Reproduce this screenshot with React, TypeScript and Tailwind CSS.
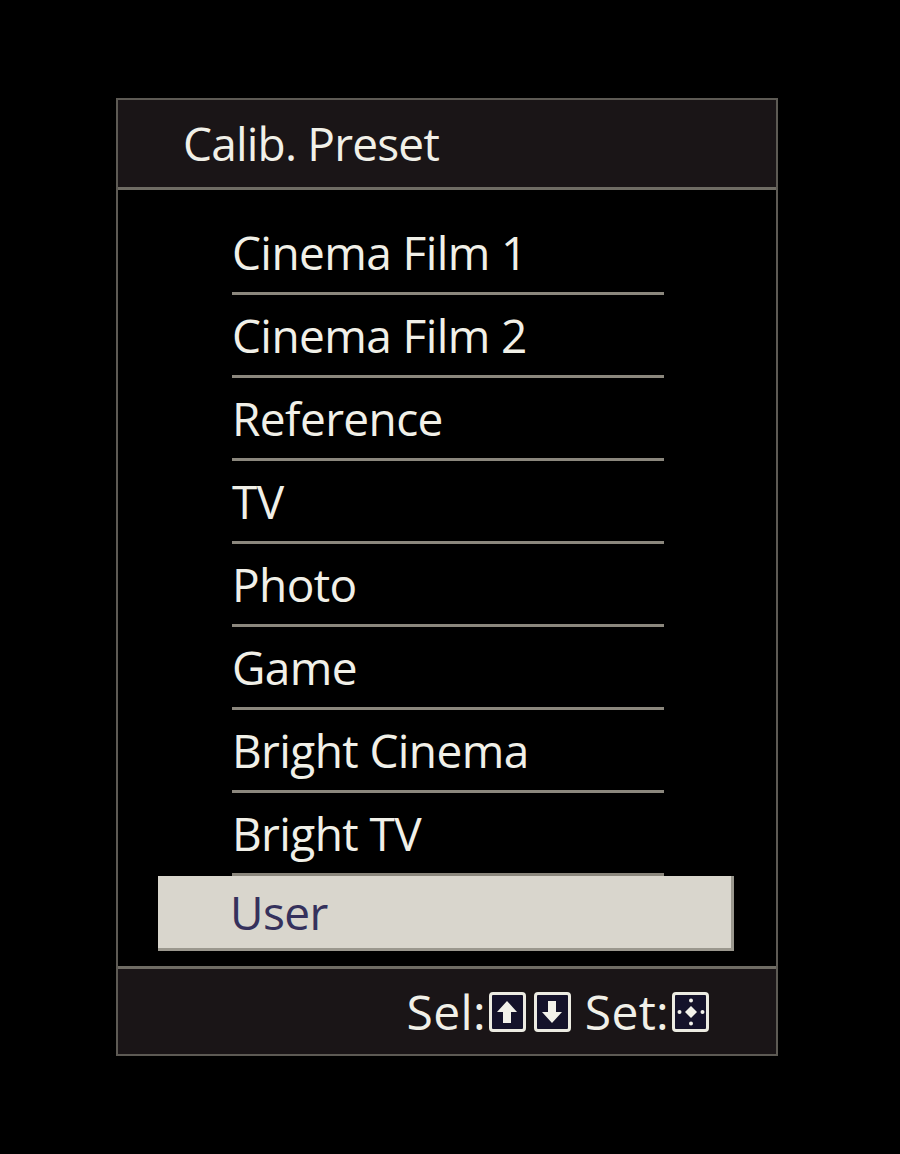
const items = [
  "Cinema Film 1",
  "Cinema Film 2",
  "Reference",
  "TV",
  "Photo",
  "Game",
  "Bright Cinema",
  "Bright TV",
];

function KeyBox({ children }: { children: React.ReactNode }) {
  return (
    <span className="inline-flex items-center justify-center w-[37px] h-[40px] rounded-[4px] border-[3px] border-[#ecebe2] bg-[#14122a]">
      {children}
    </span>
  );
}

function ArrowUp() {
  return (
    <svg width="24" height="26" viewBox="0 0 24 26">
      <path d="M12 2 L22 13 L16 13 L16 24 L8 24 L8 13 L2 13 Z" fill="#f2f1ea" />
    </svg>
  );
}

function ArrowDown() {
  return (
    <svg width="24" height="26" viewBox="0 0 24 26">
      <path d="M12 24 L22 13 L16 13 L16 2 L8 2 L8 13 L2 13 Z" fill="#f2f1ea" />
    </svg>
  );
}

function Enter() {
  return (
    <svg width="30" height="30" viewBox="0 0 30 30">
      <path d="M15 9 L21 15 L15 21 L9 15 Z" fill="#f2f1ea" />
      <circle cx="15" cy="3.5" r="2" fill="#f2f1ea" />
      <circle cx="15" cy="26.5" r="2" fill="#f2f1ea" />
      <circle cx="3.5" cy="15" r="2" fill="#f2f1ea" />
      <circle cx="26.5" cy="15" r="2" fill="#f2f1ea" />
    </svg>
  );
}

export default function App() {
  return (
    <main
      className="min-h-screen w-full bg-black pt-[98px] pl-[116px]"
      style={{ fontFamily: '"Open Sans", "Noto Sans", sans-serif' }}
    >
      <div className="w-[662px] border-2 border-[#5d5a54] bg-black">
        <div className="h-[90px] bg-[#1a1517] border-b-[3px] border-[#6f6c64] flex items-center pl-[65px]">
          <span className="text-[46px] font-medium text-[#f1f0e8] tracking-[-0.8px]">Calib. Preset</span>
        </div>

        <div className="pt-[22px] pb-[15px]">
          {items.map((label) => (
            <div key={label} className="h-[83px] flex flex-col ml-[114px] w-[432px]">
              <div className="flex-1 flex items-center text-[46px] font-medium text-[#f1f0e8] tracking-[-0.6px]">
                {label}
              </div>
              <div className="h-[3px] bg-[#8b877d]" />
            </div>
          ))}
          <div className="ml-[40px] w-[576px] h-[75px] bg-[#d9d6cd] border-b-[3px] border-r-[3px] border-[#9b988e] flex items-center pl-[72px]">
            <span className="text-[46px] font-medium text-[#35315c] tracking-[-0.6px]">User</span>
          </div>
        </div>

        <div className="h-[88px] bg-[#1a1517] border-t-[3px] border-[#6f6c64] flex items-center justify-end pr-[67px] text-[48px] font-medium text-[#f1f0e8] tracking-[0.3px]">
          <span className="mr-[3px]">Sel:</span>
          <KeyBox>
            <ArrowUp />
          </KeyBox>
          <span className="w-[8px]" />
          <KeyBox>
            <ArrowDown />
          </KeyBox>
          <span className="ml-[14px] mr-[3px]">Set:</span>
          <KeyBox>
            <Enter />
          </KeyBox>
        </div>
      </div>
    </main>
  );
}
